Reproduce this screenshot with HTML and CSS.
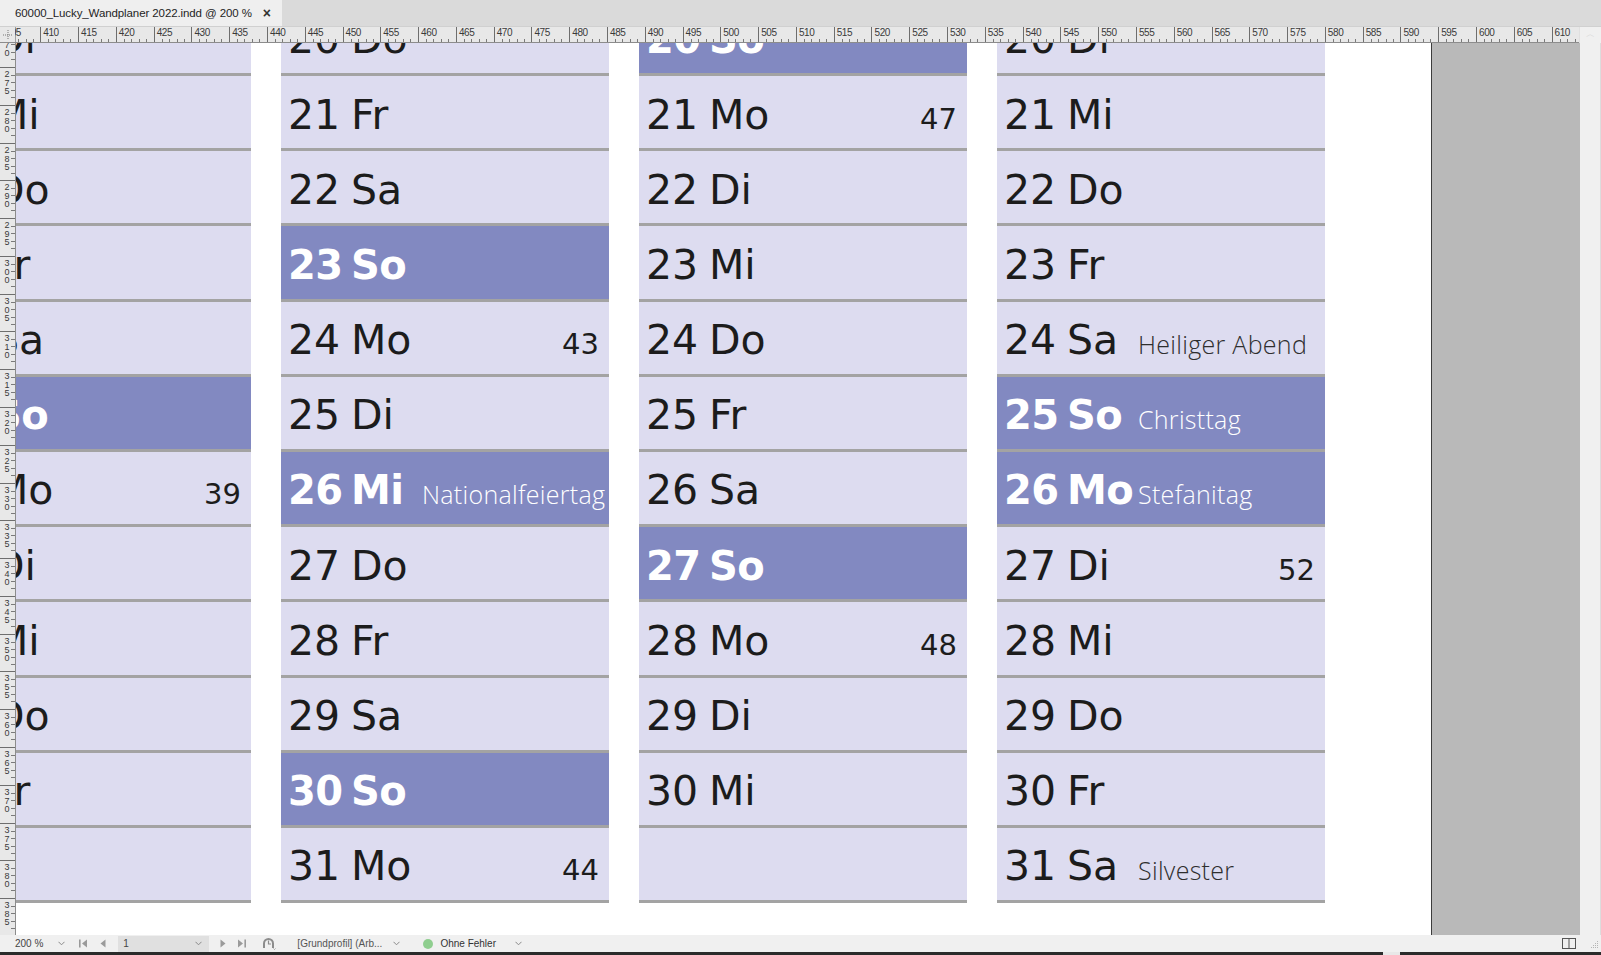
FILE: index.html
```html
<!DOCTYPE html>
<html lang="de">
<head>
<meta charset="utf-8">
<title>60000_Lucky_Wandplaner 2022.indd @ 200 %</title>
<link rel="stylesheet" href="styles.css">
</head>
<body>
<div class="app">
  <div class="tabbar">
    <div class="tab"><span class="tab-title">60000_Lucky_Wandplaner 2022.indd @ 200 %</span><span class="tab-close">×</span></div>
  </div>

  <div class="hruler-row">
    <div class="corner">
      <svg width="16" height="16" viewBox="0 0 16 16"><path d="M8 3v10M3 8h10" stroke="#777" stroke-width="1" stroke-dasharray="1 1"/></svg>
    </div>
    <div class="hruler">
      <div class="hruler-track">
        <span class="hmark">405</span><span class="hmark">410</span><span class="hmark">415</span><span class="hmark">420</span><span class="hmark">425</span><span class="hmark">430</span><span class="hmark">435</span><span class="hmark">440</span><span class="hmark">445</span><span class="hmark">450</span><span class="hmark">455</span><span class="hmark">460</span><span class="hmark">465</span><span class="hmark">470</span><span class="hmark">475</span><span class="hmark">480</span><span class="hmark">485</span><span class="hmark">490</span><span class="hmark">495</span><span class="hmark">500</span><span class="hmark">505</span><span class="hmark">510</span><span class="hmark">515</span><span class="hmark">520</span><span class="hmark">525</span><span class="hmark">530</span><span class="hmark">535</span><span class="hmark">540</span><span class="hmark">545</span><span class="hmark">550</span><span class="hmark">555</span><span class="hmark">560</span><span class="hmark">565</span><span class="hmark">570</span><span class="hmark">575</span><span class="hmark">580</span><span class="hmark">585</span><span class="hmark">590</span><span class="hmark">595</span><span class="hmark">600</span><span class="hmark">605</span><span class="hmark">610</span>
      </div>
    </div>
    <div class="scroll-cap"><span class="cap-arrow">︿</span></div>
  </div>

  <div class="workspace">
    <div class="vruler">
      <div class="vruler-track">
        <span class="vmark"><span>270</span></span><span class="vmark"><span>275</span></span><span class="vmark"><span>280</span></span><span class="vmark"><span>285</span></span><span class="vmark"><span>290</span></span><span class="vmark"><span>295</span></span><span class="vmark"><span>300</span></span><span class="vmark"><span>305</span></span><span class="vmark"><span>310</span></span><span class="vmark"><span>315</span></span><span class="vmark"><span>320</span></span><span class="vmark"><span>325</span></span><span class="vmark"><span>330</span></span><span class="vmark"><span>335</span></span><span class="vmark"><span>340</span></span><span class="vmark"><span>345</span></span><span class="vmark"><span>350</span></span><span class="vmark"><span>355</span></span><span class="vmark"><span>360</span></span><span class="vmark"><span>365</span></span><span class="vmark"><span>370</span></span><span class="vmark"><span>375</span></span><span class="vmark"><span>380</span></span><span class="vmark"><span>385</span></span><span class="vmark"><span>390</span></span>
      </div>
    </div>

    <div class="canvas">
      <div class="page">
        <div class="spread">
          <!-- September -->
          <div class="month">
            <div class="row"><span class="d">20</span><span class="w">Di</span></div>
            <div class="row"><span class="d">21</span><span class="w">Mi</span></div>
            <div class="row"><span class="d">22</span><span class="w">Do</span></div>
            <div class="row"><span class="d">23</span><span class="w">Fr</span></div>
            <div class="row"><span class="d">24</span><span class="w">Sa</span></div>
            <div class="row sun"><span class="d">25</span><span class="w">So</span></div>
            <div class="row"><span class="d">26</span><span class="w">Mo</span><span class="h"></span><span class="wk">39</span></div>
            <div class="row"><span class="d">27</span><span class="w">Di</span></div>
            <div class="row"><span class="d">28</span><span class="w">Mi</span></div>
            <div class="row"><span class="d">29</span><span class="w">Do</span></div>
            <div class="row"><span class="d">30</span><span class="w">Fr</span></div>
            <div class="row"></div>
          </div>
          <!-- Oktober -->
          <div class="month">
            <div class="row"><span class="d">20</span><span class="w">Do</span></div>
            <div class="row"><span class="d">21</span><span class="w">Fr</span></div>
            <div class="row"><span class="d">22</span><span class="w">Sa</span></div>
            <div class="row sun"><span class="d">23</span><span class="w">So</span></div>
            <div class="row"><span class="d">24</span><span class="w">Mo</span><span class="h"></span><span class="wk">43</span></div>
            <div class="row"><span class="d">25</span><span class="w">Di</span></div>
            <div class="row sun"><span class="d">26</span><span class="w">Mi</span><span class="h">Nationalfeiertag</span></div>
            <div class="row"><span class="d">27</span><span class="w">Do</span></div>
            <div class="row"><span class="d">28</span><span class="w">Fr</span></div>
            <div class="row"><span class="d">29</span><span class="w">Sa</span></div>
            <div class="row sun"><span class="d">30</span><span class="w">So</span></div>
            <div class="row"><span class="d">31</span><span class="w">Mo</span><span class="h"></span><span class="wk">44</span></div>
          </div>
          <!-- November -->
          <div class="month">
            <div class="row sun"><span class="d">20</span><span class="w">So</span></div>
            <div class="row"><span class="d">21</span><span class="w">Mo</span><span class="h"></span><span class="wk">47</span></div>
            <div class="row"><span class="d">22</span><span class="w">Di</span></div>
            <div class="row"><span class="d">23</span><span class="w">Mi</span></div>
            <div class="row"><span class="d">24</span><span class="w">Do</span></div>
            <div class="row"><span class="d">25</span><span class="w">Fr</span></div>
            <div class="row"><span class="d">26</span><span class="w">Sa</span></div>
            <div class="row sun"><span class="d">27</span><span class="w">So</span></div>
            <div class="row"><span class="d">28</span><span class="w">Mo</span><span class="h"></span><span class="wk">48</span></div>
            <div class="row"><span class="d">29</span><span class="w">Di</span></div>
            <div class="row"><span class="d">30</span><span class="w">Mi</span></div>
            <div class="row"></div>
          </div>
          <!-- Dezember -->
          <div class="month">
            <div class="row"><span class="d">20</span><span class="w">Di</span></div>
            <div class="row"><span class="d">21</span><span class="w">Mi</span></div>
            <div class="row"><span class="d">22</span><span class="w">Do</span></div>
            <div class="row"><span class="d">23</span><span class="w">Fr</span></div>
            <div class="row"><span class="d">24</span><span class="w">Sa</span><span class="h">Heiliger Abend</span></div>
            <div class="row sun"><span class="d">25</span><span class="w">So</span><span class="h">Christtag</span></div>
            <div class="row sun"><span class="d">26</span><span class="w">Mo</span><span class="h">Stefanitag</span></div>
            <div class="row"><span class="d">27</span><span class="w">Di</span><span class="h"></span><span class="wk">52</span></div>
            <div class="row"><span class="d">28</span><span class="w">Mi</span></div>
            <div class="row"><span class="d">29</span><span class="w">Do</span></div>
            <div class="row"><span class="d">30</span><span class="w">Fr</span></div>
            <div class="row"><span class="d">31</span><span class="w">Sa</span><span class="h">Silvester</span></div>
          </div>
        </div>
      </div>
      <div class="pasteboard"></div>
    </div>

    <div class="vscroll"></div>
  </div>

  <div class="statusbar">
    <span class="st-zoom">200 %</span>
    <svg class="chev chev-zoom" width="7" height="5" viewBox="0 0 7 5"><path d="M0.5 0.8L3.5 3.8L6.5 0.8" fill="none" stroke="#8a8a8a"/></svg>
    <svg class="nav nav-first" width="9" height="9" viewBox="0 0 9 9"><rect x="0" y="0.5" width="1.6" height="8" fill="#9a9a9a"/><path d="M8 0.5L3 4.5L8 8.5Z" fill="#9a9a9a"/></svg>
    <svg class="nav nav-prev" width="6" height="9" viewBox="0 0 6 9"><path d="M5.5 0.5L0.5 4.5L5.5 8.5Z" fill="#9a9a9a"/></svg>
    <div class="pagebox"><span>1</span><svg width="7" height="5" viewBox="0 0 7 5"><path d="M0.5 0.8L3.5 3.8L6.5 0.8" fill="none" stroke="#8a8a8a"/></svg></div>
    <svg class="nav nav-next" width="6" height="9" viewBox="0 0 6 9"><path d="M0.5 0.5L5.5 4.5L0.5 8.5Z" fill="#9a9a9a"/></svg>
    <svg class="nav nav-last" width="9" height="9" viewBox="0 0 9 9"><path d="M1 0.5L6 4.5L1 8.5Z" fill="#9a9a9a"/><rect x="7.4" y="0.5" width="1.6" height="8" fill="#9a9a9a"/></svg>
    <svg class="st-icon" width="14" height="13" viewBox="0 0 14 13"><path d="M2 11V6.5A4.5 4.5 0 0 1 11 6.5V11" fill="none" stroke="#8c8c8c" stroke-width="2"/><path d="M6.5 3.5V7H9" fill="none" stroke="#8c8c8c" stroke-width="1.2"/><path d="M11.5 11.5l1 1 1-1" fill="none" stroke="#8c8c8c" stroke-width="0.8"/></svg>
    <span class="st-profile">[Grundprofil] (Arb...</span>
    <svg class="chev chev-profile" width="7" height="5" viewBox="0 0 7 5"><path d="M0.5 0.8L3.5 3.8L6.5 0.8" fill="none" stroke="#8a8a8a"/></svg>
    <span class="st-dot"></span>
    <span class="st-errors">Ohne Fehler</span>
    <svg class="chev chev-errors" width="7" height="5" viewBox="0 0 7 5"><path d="M0.5 0.8L3.5 3.8L6.5 0.8" fill="none" stroke="#8a8a8a"/></svg>
    <span class="st-spacer"></span>
    <svg class="st-panels" width="14" height="11" viewBox="0 0 14 11"><rect x="0.5" y="0.5" width="13" height="10" fill="none" stroke="#555"/><path d="M7 0.5V10.5" stroke="#555"/></svg>
    <svg class="st-grip" width="10" height="10" viewBox="0 0 10 10"><g fill="#b5b5b5"><rect x="8" y="2" width="1" height="1"/><rect x="6" y="4" width="1" height="1"/><rect x="8" y="4" width="1" height="1"/><rect x="4" y="6" width="1" height="1"/><rect x="6" y="6" width="1" height="1"/><rect x="8" y="6" width="1" height="1"/><rect x="2" y="8" width="1" height="1"/><rect x="4" y="8" width="1" height="1"/><rect x="6" y="8" width="1" height="1"/><rect x="8" y="8" width="1" height="1"/></g></svg>
  </div>
  <div class="taskbar"><span class="taskbar-gap"></span></div>
</div>
</body>
</html>
```
FILE: styles.css
```css
* { box-sizing: border-box; }

html, body {
  margin: 0;
  padding: 0;
  background: #f0f0f0;
}

.app {
  width: 1601px;
  height: 955px;
  display: flex;
  flex-direction: column;
  overflow: hidden;
  font-family: "Liberation Sans", Arial, sans-serif;
}

/* ---------- tab bar ---------- */
.tabbar {
  height: 27px;
  flex: none;
  background: #dadada;
  display: flex;
  border-bottom: 1px solid #d0d0d0;
}

.tab {
  width: 282px;
  height: 100%;
  background: #efefef;
  display: flex;
  align-items: center;
  padding-left: 15px;
}

.tab-title {
  font-size: 11.5px;
  color: #1e1e1e;
  letter-spacing: -0.1px;
}

.tab-close {
  margin-left: 11px;
  font-size: 14px;
  font-weight: bold;
  color: #333;
  line-height: 1;
}

/* ---------- horizontal ruler ---------- */
.hruler-row {
  height: 16px;
  flex: none;
  display: flex;
  background: #e8e8e8;
}

.corner {
  width: 16px;
  flex: none;
  border-right: 1px solid #a0a0a0;
  border-bottom: 1px solid #8c8c8c;
}

.corner svg { display: block; }

.hruler {
  width: 1564px;
  flex: none;
  overflow: hidden;
  border-bottom: 1px solid #8c8c8c;
  margin-left: -1px;
}

.hruler-track {
  display: flex;
  margin-left: -12.5px;
}

.hmark {
  flex: none;
  width: 37.785px;
  height: 15px;
  border-left: 1px solid #6e6e6e;
  padding-left: 2px;
  font-size: 10px;
  line-height: 11px;
  color: #3a3a3a;
  letter-spacing: -0.4px;
  background:
    repeating-linear-gradient(to right, transparent 0 6.557px, #7a7a7a 6.557px 7.557px) left bottom / 100% 3px no-repeat;
}

.scroll-cap {
  flex: 1;
  background: #f0f0f0;
  display: flex;
  justify-content: center;
  border-left: 1px solid #e0e0e0;
}

.cap-arrow {
  font-size: 9px;
  color: #d8d8d8;
  line-height: 14px;
}

/* ---------- workspace ---------- */
.workspace {
  height: 892px;
  flex: none;
  display: flex;
}

.vruler {
  width: 16px;
  flex: none;
  background: #e8e8e8;
  border-right: 1px solid #8c8c8c;
  overflow: hidden;
}

.vruler-track {
  display: flex;
  flex-direction: column;
  margin-top: -13.8px;
}

.vmark {
  flex: none;
  height: 37.785px;
  border-top: 1px solid #6e6e6e;
  padding: 1px 0 0 2px;
  background:
    repeating-linear-gradient(to bottom, transparent 0 6.557px, #7a7a7a 6.557px 7.557px) right top / 4px 100% no-repeat;
}

.vmark span {
  display: block;
  writing-mode: vertical-lr;
  text-orientation: upright;
  font-size: 9px;
  line-height: 9px;
  letter-spacing: -1.4px;
  color: #3a3a3a;
}

.canvas {
  width: 1564px;
  flex: none;
  display: flex;
  overflow: hidden;
}

.page {
  width: 1415px;
  flex: none;
  background: #ffffff;
  overflow: hidden;
}

.pasteboard {
  flex: 1;
  background: #b9b9b9;
  border-left: 1px solid #3c3c3c;
}

.vscroll {
  flex: 1;
  background: #f0f0f0;
  border-right: 1px solid #dcdcdc;
}

/* ---------- calendar ---------- */
.spread {
  display: flex;
  gap: 30px;
  margin: -42.2px 0 0 -93px;
}

.month {
  width: 328px;
  flex: none;
}

.row {
  height: 75.2px;
  background: #dddcf0;
  border-bottom: 3px solid #a3a3a3;
  display: grid;
  grid-template-columns: 54px 62px 1fr auto;
  column-gap: 9px;
  align-items: baseline;
  padding: 18.5px 10px 0 7px;
  color: #1c1c1c;
  font-family: "DejaVu Sans", "Liberation Sans", sans-serif;
}

.row.sun {
  background: #8289c1;
  color: #ffffff;
}

.d, .w {
  font-size: 41px;
  line-height: 41px;
  white-space: nowrap;
}

.row.sun .d,
.row.sun .w {
  font-weight: bold;
  font-size: 40px;
  letter-spacing: -0.5px;
}

.h {
  font-family: "Open Sans", "Liberation Sans", sans-serif;
  font-weight: 300;
  font-size: 25px;
  letter-spacing: 0.3px;
  color: #2e2e2e;
  white-space: nowrap;
}

.row.sun .h { color: #ffffff; }

.wk {
  font-size: 29px;
  justify-self: end;
}

/* ---------- status bar ---------- */
.statusbar {
  height: 17px;
  flex: none;
  display: flex;
  align-items: center;
  background: #f0f0f0;
  font-size: 10px;
  color: #444;
  padding-left: 15px;
}

.statusbar svg { display: block; flex: none; }

.chev-zoom { margin-left: 15px; }
.nav-first { margin-left: 14px; }
.nav-prev { margin-left: 12px; }

.pagebox {
  margin-left: 12px;
  width: 91px;
  height: 16px;
  background: #e0e0e0;
  display: flex;
  align-items: center;
  justify-content: space-between;
  padding: 0 7px 0 5px;
  color: #444;
}

.nav-next { margin-left: 11px; }
.nav-last { margin-left: 11px; }
.st-icon { margin-left: 16px; }
.st-profile { margin-left: 21px; color: #555; }
.chev-profile { margin-left: 11px; }

.st-dot {
  margin-left: 23px;
  width: 10px;
  height: 10px;
  border-radius: 50%;
  background: #8fce8f;
  flex: none;
}

.st-errors { margin-left: 7px; color: #333; }
.chev-errors { margin-left: 19px; }
.st-spacer { flex: 1; }
.st-panels { margin-right: 13px; }
.st-grip { margin-right: 2px; }

.taskbar {
  flex: 1;
  background: #2b2b2b;
  display: flex;
}

.taskbar-gap {
  margin-left: 1383px;
  width: 17px;
  background: #e8e8e8;
}
```
